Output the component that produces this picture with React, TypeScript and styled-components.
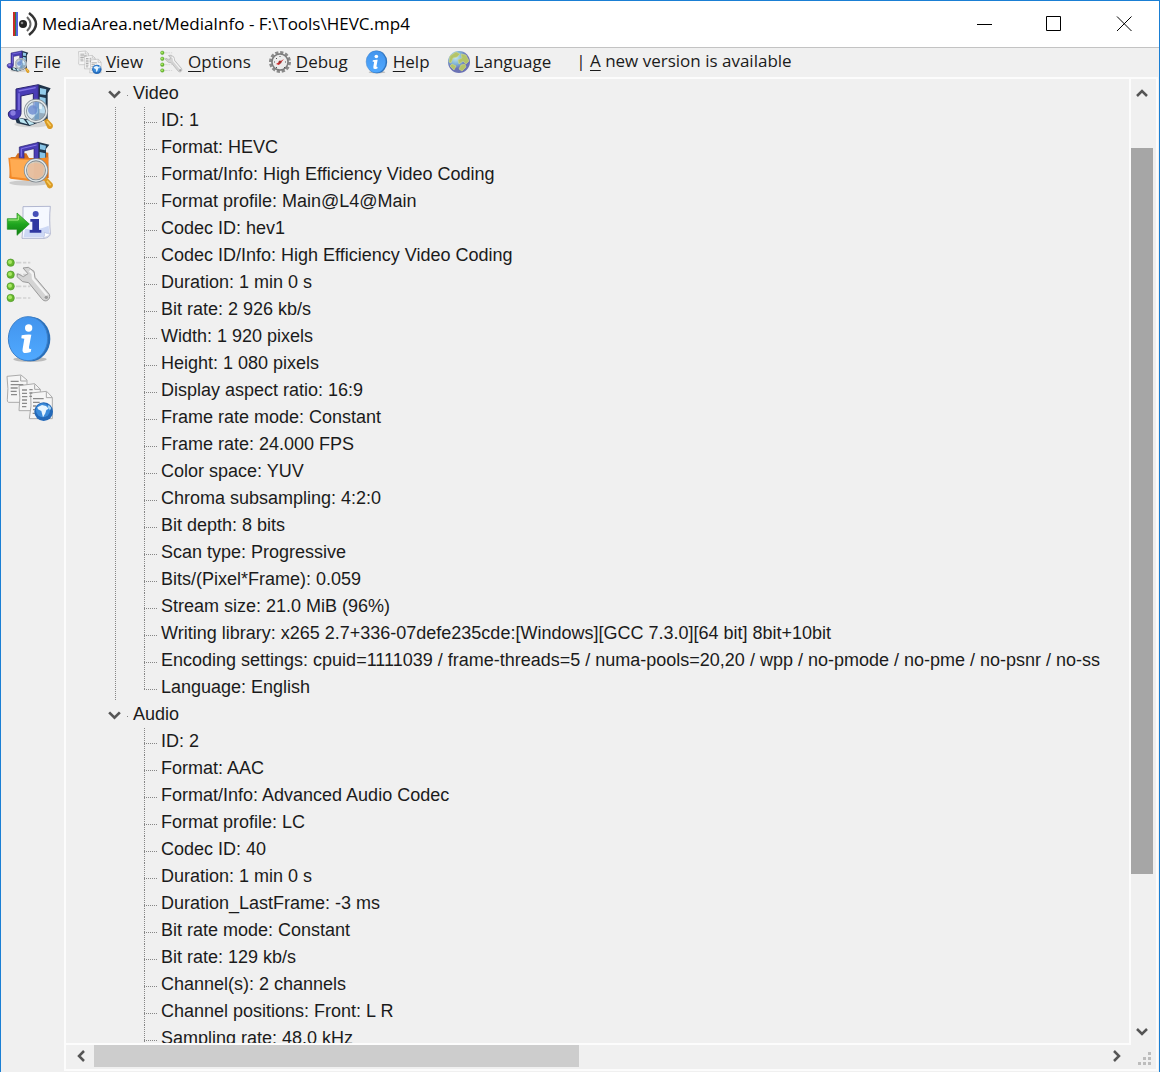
import React, { useState } from "react";
import styled, { createGlobalStyle } from "styled-components";

const uiFont = `"Open Sans", "Noto Sans", sans-serif`;
const treeFont = `"Liberation Sans", Arial, sans-serif`;
const face = "#f0f0f0";
const dot = "#868686";

const GlobalStyle = createGlobalStyle`
  *, *::before, *::after { box-sizing: border-box; }
  body { margin: 0; background: ${face}; }
  button { border: 0; padding: 0; margin: 0; background: none; color: inherit; font: inherit; }
  ul { list-style: none; margin: 0; padding: 0; }
`;

const Window = styled.div`
  display: flex;
  flex-direction: column;
  height: 100vh;
  border: 1px solid #1a7fd4;
  border-bottom: 0;
  background: ${face};
  color: #1b1b1b;
  overflow: hidden;
`;

const TitleBar = styled.header`
  display: flex;
  align-items: center;
  flex: none;
  height: 47px;
  padding-left: 11px;
  background: #fff;
  border-bottom: 1px solid #c3c3c3;
`;

const Title = styled.h1`
  flex: 1;
  min-width: 0;
  margin: 0 0 0 4px;
  color: #000;
  font: 400 17px/26px ${uiFont};
  white-space: nowrap;
`;

const CaptionButton = styled.button`
  display: grid;
  place-items: center;
  width: 70px;
  height: 46px;
  &:hover { background: #e5e5e5; }
`;

const MenuBar = styled.nav`
  display: flex;
  align-items: center;
  flex: none;
  gap: 17px;
  height: 29px;
  padding: 0 0 1px 5px;
  font: 400 17px/24px ${uiFont};
  white-space: nowrap;
`;

const MenuItem = styled.button`
  display: flex;
  align-items: center;
  gap: 4px;
  u { text-underline-offset: 3px; text-decoration-thickness: 1px; }
`;

const Notice = styled(MenuItem)`
  padding: 0 0 3px 8px;
`;

const Body = styled.div`
  display: flex;
  flex: 1;
  min-height: 0;
`;

const Toolbar = styled.aside`
  display: flex;
  flex-direction: column;
  flex: none;
  gap: 10px;
  width: 63px;
  padding: 6px 0 0 5px;
`;

const Tool = styled.button`
  display: block;
  width: 48px;
  height: 48px;
  svg { display: block; }
`;

const Panel = styled.main`
  display: grid;
  grid-template-columns: minmax(0, 1fr) 25px;
  grid-template-rows: minmax(0, 1fr) 24px;
  flex: 1;
  min-width: 0;
  margin: 0 1px 1px 0;
  border: 2px solid #fcfcfc;
`;

const Viewport = styled.div`
  overflow: hidden;
  padding: 1px 0 0 41px;
  border: solid #fcfcfc;
  border-width: 0 2px 2px 0;
  font: 400 18px/27px ${treeFont};
  white-space: nowrap;
`;

const NodeHeader = styled.button`
  display: flex;
  align-items: center;
  height: 27px;
  svg { margin-right: 5px; }
`;

const Tick = styled.span`
  width: 1px;
  height: 1px;
  margin: 4px 5px 0 0;
  background: ${dot};
`;

const Leaves = styled.ul<{ $trunk: boolean }>`
  margin-left: 8px;
  padding-left: 29px;
  background: ${p => p.$trunk ? `repeating-linear-gradient(${dot} 0 1px, transparent 1px 2px) 0 0 / 1px 100% no-repeat` : "none"};
`;

const Leaf = styled.li`
  display: flex;
  height: 27px;
`;

const Stem = styled.span<{ $last: boolean }>`
  flex: none;
  width: 13px;
  margin-right: 4px;
  background:
    repeating-linear-gradient(${dot} 0 1px, transparent 1px 2px) 0 0 / 1px ${p => p.$last ? "15px" : "100%"} no-repeat,
    repeating-linear-gradient(90deg, ${dot} 0 1px, transparent 1px 2px) 0 15px / 100% 1px no-repeat;
`;

const VScroll = styled.div`
  display: flex;
  flex-direction: column;
  padding: 4px 3px 3px 0;
`;

const HScroll = styled.div`
  display: flex;
  padding: 0 4px 2px 4px;
`;

const ArrowButton = styled.button<{ $width: number }>`
  display: grid;
  place-items: center;
  flex: none;
  width: ${p => p.$width}px;
  height: 22px;
`;

const Space = styled.div<{ $size: number }>`
  flex: ${p => p.$size} 0 0;
`;

const Thumb = styled(Space)<{ $tone: string }>`
  background: ${p => p.$tone};
`;

const Grip = styled.div`
  display: grid;
  place-items: center start;
  padding: 4px 0 0 7px;
`;

type IconProps = { size?: number };

const Magnifier = () => (
  <g>
    <path d="M132 134l9-7 16 17c4 6 1 13-5 15-5 1-9-1-11-6z" fill="#d99a24" />
    <path d="M141 136l11 14" stroke="#f8c95a" strokeWidth="5" />
    <circle cx="108" cy="105" r="32" fill="#c7dff0" fillOpacity=".7" stroke="#828c94" strokeWidth="9" />
    <circle cx="108" cy="105" r="32" fill="none" stroke="#e4e9ea" strokeWidth="4" />
  </g>
);

const Note = () => (
  <path d="M48 103V39l67-13v70h-15V52l-37 8v50c0 12-9 20-20 20s-18-7-18-16 9-14 23-11z" fill="#4a3db6" stroke="#29236f" strokeWidth="3" />
);

const MediaIcon = ({ size = 48 }: IconProps) => (
  <svg width={size} height={size} viewBox="18 21 144 144">
    <ellipse cx="95" cy="145" rx="52" ry="9" fill="#d4d4d4" />
    <path d="M115 25l37 12-9 15v78l-55 20-38-9-6-18 48 8 22-20z" fill="#1f3348" />
    <path d="M120 36l19 4-2 17-17-2zM119 62l18 4v19l-18-4zM119 89l18 4v20l-18-3z" fill="#93cbe9" />
    <path d="M56 126l15 4 12 15-22-6zM78 131l18 4 6 9-14 3z" fill="#bce6f2" />
    <Note />
    <path d="M56 45l51-10M57 52v50" fill="none" stroke="#8578e6" strokeWidth="4" />
    <circle cx="39" cy="111" r="8" fill="#887ce0" />
    <Magnifier />
    <path d="M104 78l13 1v50l-13 2z" fill="#4e8dca" opacity=".5" />
    <circle cx="98" cy="102" r="14" fill="#6c8bd0" opacity=".8" />
    <path d="M117 82l10 4-2 14-8-2z" fill="#eefaff" opacity=".8" />
  </svg>
);

const FolderIcon = ({ size = 48 }: IconProps) => (
  <svg width={size} height={size} viewBox="18 195 144 144">
    <ellipse cx="88" cy="321" rx="60" ry="8" fill="#ccc" />
    <path d="M32 243h14l7-11h26l8 14h38v-19l20 3 1 76-38 8-80-8z" fill="#d4701e" />
    <path d="M112 197l36 9-10 13v66h-23z" fill="#22384d" />
    <path d="M120 205l18 4-2 14-16-3zM119 228l17 4v18l-17-4z" fill="#87c4e7" />
    <path d="M58 248v-35l58-14v59h-14v-40l-30 7v26z" fill="#4a3db6" stroke="#29236f" strokeWidth="2" />
    <path d="M64 242v-24l46-11" fill="none" stroke="#8578e6" strokeWidth="3" />
    <path d="M25 245l81 4 39-5-5 68-26 6-83-10z" fill="#f38a28" />
    <path d="M30 249l73 4-3 57-65-8z" fill="#ffab52" />
    <g transform="translate(0 178)"><Magnifier /></g>
    <path d="M83 268q20-14 48 0l-2 30-20 12-24-8z" fill="#f2b58c" opacity=".6" />
  </svg>
);

const ExportIcon = ({ size = 48 }: IconProps) => (
  <svg width={size} height={size} viewBox="18 9 144 144">
    <defs><linearGradient id="arrowGreen" x2="0" y2="1"><stop stopColor="#71d84d" /><stop offset=".5" stopColor="#1ea51f" /><stop offset="1" stopColor="#117d12" /></linearGradient></defs>
    <path d="M69 32l82-1c-3 28-2 55 0 82q-2 12-19 14H66c3-34 3-64 3-95z" fill="#f5f8ff" stroke="#9199bc" strokeWidth="2" />
    <path d="M75 98q38 6 71-9l2 24-17 11H71z" fill="#cdd8f5" />
    <path d="M131 126q5-10 2-17 7 5 17 3-4 10-19 14z" fill="#fff" stroke="#8995c6" />
    <circle cx="107" cy="54" r="9" fill="#4650b8" />
    <path d="M91 69h26v33h7v8H89v-8h8V77h-6z" fill="#3038a1" />
    <path d="M22 68h29V51l37 33-37 34v-18H22z" fill="url(#arrowGreen)" stroke="#168c18" strokeWidth="2" />
    <path d="M25 72h30V60" fill="none" stroke="#a6ed83" strokeWidth="3" />
  </svg>
);

const OptionsIcon = ({ size = 48 }: IconProps) => (
  <svg width={size} height={size} viewBox="18 183 144 144">
    {[200, 236, 271, 306].map(y => (
      <g key={y}>
        <path d={`M48 ${y}h16m5 0h10m5 0h7`} stroke="#d2d2d2" strokeWidth="5" />
        <circle cx="32" cy={y} r="11" fill="#69b82d" stroke="#4c962b" strokeWidth="2" />
        <circle cx="30" cy={y - 2} r="6" fill="#a9e866" />
      </g>
    ))}
    <path d="M69 216l16-2 17 12 3 18 43 51c3 8 0 16-8 19-6 2-11-1-15-6l-39-48-18-3-17-15 2-9 17 9 14-9z" fill="#d4d4d4" stroke="#9a9a9a" strokeWidth="3" />
    <path d="M89 224l9 9 1 15 42 50" fill="none" stroke="#f4f4f4" strokeWidth="7" />
    <circle cx="139" cy="304" r="5" fill="#999" />
  </svg>
);

const InfoIcon = ({ size = 48 }: IconProps) => (
  <svg width={size} height={size} viewBox="18 9 144 144">
    <defs><linearGradient id="infoBlue" x2="0" y2="1"><stop stopColor="#4294ed" /><stop offset="1" stopColor="#50a9ff" /></linearGradient></defs>
    <ellipse cx="90" cy="142" rx="50" ry="8" fill="#bbb" />
    <ellipse cx="91" cy="81" rx="60" ry="67" fill="#286eb9" />
    <ellipse cx="84" cy="80" rx="59" ry="66" fill="url(#infoBlue)" stroke="#3d81ca" strokeWidth="3" />
    <circle cx="86" cy="48" r="11" fill="#fff" />
    <path d="M65 70q15-3 29-2l-7 37q-1 9 7 5l-2 10q-28 10-24-10l5-30-9-1z" fill="#fff" />
  </svg>
);

const SheetsIcon = ({ size = 48 }: IconProps) => (
  <svg width={size} height={size} viewBox="18 183 144 144">
    <g fill="#f5f5f5" stroke="#ababab" strokeWidth="3">
      <path d="M21 193l42-4 18 15v67H26q-5 0-4-9 4-30-1-69z" />
      <path d="M57 221l47-6 17 17v64H57q5-39 0-75z" />
      <path d="M92 243l48-5 17 18v64H88q8-38 4-77z" />
    </g>
    <path d="M62 191v16h18M104 217v15h17M139 240v17h17" fill="none" stroke="#a5a5a5" strokeWidth="3" />
    <path d="M32 208h24m-24 10h38m-38 10h21m-21 10h18m-17 10h18M66 234h15m-15 10h15m-15 10h16m-16 10h15m-15 10h15m-15 10h13M88 233h10m-10 10h9m-9 10h8M99 260h32m-32 11h20m-20 11h10m-10 11h6m-7 11h9" stroke="#8a8a8a" strokeWidth="4" />
    <circle cx="131" cy="299" r="28" fill="#2469b8" />
    <circle cx="129" cy="295" r="21" fill="#3b8bda" />
    <path d="M112 286l14-7 12 3 8 8-7 4-3 10-7 12-5-19-10-5z" fill="#e7f5ff" />
    <path d="M146 278l8 10-4 7-7-9z" fill="#a9d5f5" />
  </svg>
);

const DebugIcon = () => (
  <svg width="24" height="24" viewBox="0 0 24 24">
    <circle cx="12" cy="12" r="9" fill="#b7b7b7" stroke="#8a8a8a" strokeWidth="4" strokeDasharray="3 1.7" />
    <circle cx="12" cy="12" r="8" fill="#ececec" stroke="#7c7c7c" strokeWidth="1.5" />
    <path d="M8 8l1 1m3-3v1m5 5h1M6 12h1m2 5l-1 1m8-1l1 1" stroke="#555" />
    <path d="M8 14l8-5-5 6z" fill="#cf2929" /><circle cx="12" cy="12" r="1.5" fill="#9a3030" />
  </svg>
);

const GlobeIcon = () => (
  <svg width="24" height="24" viewBox="0 0 24 24">
    <defs><radialGradient id="globe" cx=".35" cy=".3"><stop stopColor="#c4e6ee" /><stop offset=".6" stopColor="#80b4d6" /><stop offset="1" stopColor="#6b72b4" /></radialGradient></defs>
    <circle cx="12" cy="12" r="11" fill="url(#globe)" />
    <path d="M3 6l6-4 4 2-3 3-4 1-2 5-2-1zM14 4l5 1 3 6-3 3-3-3-4 3-1-4 4-2zM14 15l4-1 1 3-4 4-3-2zM5 14l4 2-2 4-4-4z" fill="#b3c468" stroke="#d2d98d" strokeWidth=".6" />
  </svg>
);

const AppIcon = () => (
  <svg width="26" height="26" viewBox="0 0 26 26">
    <path d="M1 1h2v24H1z" fill="#c92b27" /><path d="M3 1h1v24H3z" fill="#39753e" /><path d="M4 1h2v24H4z" fill="#5267df" />
    <circle cx="11" cy="13" r="4" fill="#222" /><circle cx="10" cy="12" r="1.3" fill="#888" />
    <path d="M15 6q7 7 0 14" fill="none" stroke="#666" strokeWidth="2" />
    <path d="M17 2q14 11 0 22" fill="none" stroke="#333" strokeWidth="2.5" />
  </svg>
);

const chevrons = {
  up: "M2 9l5-5 5 5",
  down: "M2 5l5 5 5-5",
  left: "M9 2L4 7l5 5",
  right: "M5 2l5 5-5 5",
};

const Chevron = ({ to, size = 14 }: { to: keyof typeof chevrons; size?: number }) => (
  <svg width={size} height={size} viewBox="0 0 14 14">
    <path d={chevrons[to]} fill="none" stroke="#555" strokeWidth="2.5" />
  </svg>
);

const menus = [
  { label: "File", icon: <MediaIcon size={24} /> },
  { label: "View", icon: <SheetsIcon size={24} /> },
  { label: "Options", icon: <OptionsIcon size={24} /> },
  { label: "Debug", icon: <DebugIcon /> },
  { label: "Help", icon: <InfoIcon size={24} /> },
  { label: "Language", icon: <GlobeIcon /> },
];

const tools = [
  { label: "Open file", icon: <MediaIcon /> },
  { label: "Open folder", icon: <FolderIcon /> },
  { label: "Export", icon: <ExportIcon /> },
  { label: "Preferences", icon: <OptionsIcon /> },
  { label: "About", icon: <InfoIcon /> },
  { label: "Choose view", icon: <SheetsIcon /> },
];

const streams = [
  {
    kind: "Video",
    fields: [
      "ID: 1",
      "Format: HEVC",
      "Format/Info: High Efficiency Video Coding",
      "Format profile: Main@L4@Main",
      "Codec ID: hev1",
      "Codec ID/Info: High Efficiency Video Coding",
      "Duration: 1 min 0 s",
      "Bit rate: 2 926 kb/s",
      "Width: 1 920 pixels",
      "Height: 1 080 pixels",
      "Display aspect ratio: 16:9",
      "Frame rate mode: Constant",
      "Frame rate: 24.000 FPS",
      "Color space: YUV",
      "Chroma subsampling: 4:2:0",
      "Bit depth: 8 bits",
      "Scan type: Progressive",
      "Bits/(Pixel*Frame): 0.059",
      "Stream size: 21.0 MiB (96%)",
      "Writing library: x265 2.7+336-07defe235cde:[Windows][GCC 7.3.0][64 bit] 8bit+10bit",
      "Encoding settings: cpuid=1111039 / frame-threads=5 / numa-pools=20,20 / wpp / no-pmode / no-pme / no-psnr / no-ss",
      "Language: English",
    ],
    complete: true,
  },
  {
    kind: "Audio",
    fields: [
      "ID: 2",
      "Format: AAC",
      "Format/Info: Advanced Audio Codec",
      "Format profile: LC",
      "Codec ID: 40",
      "Duration: 1 min 0 s",
      "Duration_LastFrame: -3 ms",
      "Bit rate mode: Constant",
      "Bit rate: 129 kb/s",
      "Channel(s): 2 channels",
      "Channel positions: Front: L R",
      "Sampling rate: 48.0 kHz",
    ],
    complete: false,
  },
];

function StreamNode({ stream, trunk }: { stream: (typeof streams)[number]; trunk: boolean }) {
  const [open, setOpen] = useState(true);
  return (
    <li>
      <NodeHeader aria-expanded={open} onClick={() => setOpen(!open)}>
        <Chevron to={open ? "down" : "right"} size={15} />
        <Tick />
        {stream.kind}
      </NodeHeader>
      {open && (
        <Leaves $trunk={trunk}>
          {stream.fields.map((field, i) => (
            <Leaf key={field}>
              <Stem $last={stream.complete && i === stream.fields.length - 1} />
              {field}
            </Leaf>
          ))}
        </Leaves>
      )}
    </li>
  );
}

export default function App() {
  return (
    <Window>
      <GlobalStyle />
      <TitleBar>
        <AppIcon />
        <Title>MediaArea.net/MediaInfo - F:\Tools\HEVC.mp4</Title>
        <CaptionButton aria-label="Minimize">
          <svg width="16" height="16" viewBox="0 0 16 16"><path d="M1 8.5h15" stroke="#000" /></svg>
        </CaptionButton>
        <CaptionButton aria-label="Maximize">
          <svg width="16" height="16" viewBox="0 0 16 16"><path d="M.5.5h14v14H.5z" fill="none" stroke="#000" /></svg>
        </CaptionButton>
        <CaptionButton aria-label="Close">
          <svg width="16" height="16" viewBox="0 0 16 16"><path d="M1 .5l14.5 14.5m0-14.5L1 15" stroke="#000" /></svg>
        </CaptionButton>
      </TitleBar>
      <MenuBar>
        {menus.map(({ label, icon }) => (
          <MenuItem key={label}>
            {icon}
            <span><u>{label[0]}</u>{label.slice(1)}</span>
          </MenuItem>
        ))}
        <Notice><span>| <u>A</u> new version is available</span></Notice>
      </MenuBar>
      <Body>
        <Toolbar>
          {tools.map(({ label, icon }) => <Tool key={label} aria-label={label}>{icon}</Tool>)}
        </Toolbar>
        <Panel>
          <Viewport>
            <ul>
              {streams.map((stream, i) => (
                <StreamNode key={stream.kind} stream={stream} trunk={i < streams.length - 1} />
              ))}
            </ul>
          </Viewport>
          <VScroll>
            <ArrowButton $width={22} aria-label="Scroll up"><Chevron to="up" /></ArrowButton>
            <Space $size={43} />
            <Thumb $size={726} $tone="#a6a6a6" />
            <Space $size={146} />
            <ArrowButton $width={22} aria-label="Scroll down"><Chevron to="down" /></ArrowButton>
          </VScroll>
          <HScroll>
            <ArrowButton $width={24} aria-label="Scroll left"><Chevron to="left" /></ArrowButton>
            <Thumb $size={484} $tone="#cdcdcd" />
            <Space $size={525} />
            <ArrowButton $width={22} aria-label="Scroll right"><Chevron to="right" /></ArrowButton>
          </HScroll>
          <Grip>
            <svg width="14" height="14" viewBox="0 0 14 14">
              <path d="M10 0h3v3h-3zM5 5h3v3H5zM10 5h3v3h-3zM0 10h3v3H0zM5 10h3v3H5zM10 10h3v3h-3z" fill="#bdbdbd" />
            </svg>
          </Grip>
        </Panel>
      </Body>
    </Window>
  );
}
